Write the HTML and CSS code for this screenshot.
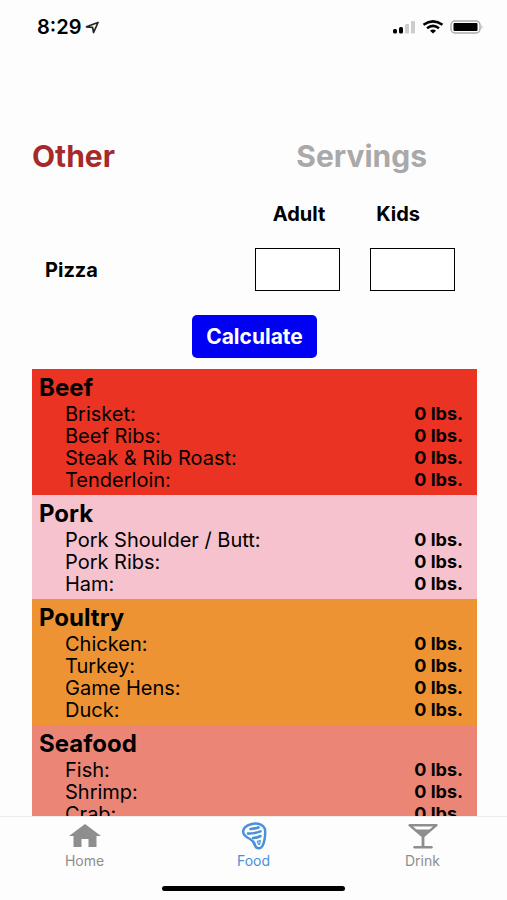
FILE: index.html
```html
<!DOCTYPE html>
<html lang="en">
<head>
  <meta charset="UTF-8">
  <title>Food Calculator</title>
  <meta name="viewport" content="width=device-width, initial-scale=1">
  <link rel="stylesheet" href="styles.css">
</head>
<body>

<header class="status-bar">
  <div class="status-time">
    <span>8:29</span>
    <svg width="15" height="13" viewBox="0 0 15 13"><path d="M1.5 5.8 L13 1.5 L8.6 11.5 L7.6 6.3 Z" fill="none" stroke="#222" stroke-width="1.7" stroke-linejoin="round"/></svg>
  </div>
  <div class="status-icons">
    <svg width="24" height="14" viewBox="0 0 24 14">
      <rect x="1" y="9" width="4" height="4.5" rx="1.5" fill="#000"/>
      <rect x="7" y="7" width="4" height="6.5" rx="1.5" fill="#000"/>
      <rect x="13" y="4" width="4" height="9.5" rx="1" fill="#ccc"/>
      <rect x="19" y="1" width="4" height="12.5" rx="1" fill="#ccc"/>
    </svg>
    <svg width="22" height="14" viewBox="0 0 22 14">
      <path d="M1.5 4.8 Q11 -2 20.5 4.8" fill="none" stroke="#000" stroke-width="2.6"/>
      <path d="M5 8.2 Q11 3.6 17 8.2" fill="none" stroke="#000" stroke-width="2.5"/>
      <path d="M8 10.8 Q11 8.4 14 10.8 L11 13.4 Z" fill="#000"/>
    </svg>
    <svg width="34" height="14" viewBox="0 0 34 14">
      <rect x="1" y="1" width="29" height="12" rx="4" fill="none" stroke="#aaa" stroke-width="1.4"/>
      <rect x="3.5" y="3" width="24" height="8" rx="1" fill="#000"/>
      <path d="M31.5 5 Q33.5 7 31.5 9 Z" fill="#aaa"/>
    </svg>
  </div>
</header>

<main class="content">
  <form class="servings-form">
    <div class="title-row">
      <h1>Other</h1>
      <h2>Servings</h2>
    </div>
    <div class="label-row">
      <label for="pizza-adult">Adult</label>
      <label for="pizza-kids">Kids</label>
    </div>
    <div class="input-row">
      <span class="food-name">Pizza</span>
      <input type="text" inputmode="numeric" id="pizza-adult" name="pizza_adult">
      <input type="text" inputmode="numeric" id="pizza-kids" name="pizza_kids">
    </div>
    <button type="button" class="calculate">Calculate</button>
  </form>

  <section class="group beef">
    <h3>Beef</h3>
    <dl>
      <div><dt>Brisket:</dt><dd>0 lbs.</dd></div>
      <div><dt>Beef Ribs:</dt><dd>0 lbs.</dd></div>
      <div><dt>Steak &amp; Rib Roast:</dt><dd>0 lbs.</dd></div>
      <div><dt>Tenderloin:</dt><dd>0 lbs.</dd></div>
    </dl>
  </section>

  <section class="group pork">
    <h3>Pork</h3>
    <dl>
      <div><dt>Pork Shoulder / Butt:</dt><dd>0 lbs.</dd></div>
      <div><dt>Pork Ribs:</dt><dd>0 lbs.</dd></div>
      <div><dt>Ham:</dt><dd>0 lbs.</dd></div>
    </dl>
  </section>

  <section class="group poultry">
    <h3>Poultry</h3>
    <dl>
      <div><dt>Chicken:</dt><dd>0 lbs.</dd></div>
      <div><dt>Turkey:</dt><dd>0 lbs.</dd></div>
      <div><dt>Game Hens:</dt><dd>0 lbs.</dd></div>
      <div><dt>Duck:</dt><dd>0 lbs.</dd></div>
    </dl>
  </section>

  <section class="group seafood">
    <h3>Seafood</h3>
    <dl>
      <div><dt>Fish:</dt><dd>0 lbs.</dd></div>
      <div><dt>Shrimp:</dt><dd>0 lbs.</dd></div>
      <div><dt>Crab:</dt><dd>0 lbs.</dd></div>
    </dl>
  </section>
</main>

<footer class="bottom">
  <nav class="tabs">
    <a href="#home">
      <svg width="32" height="28" viewBox="0 0 32 28"><path d="M16 2 L32 14 H27.5 V25 H19.5 V17 H12.5 V25 H4.5 V14 H0 Z" fill="currentColor"/></svg>
      Home
    </a>
    <a href="#food" class="active">
      <svg width="32" height="28" viewBox="0 0 32 28">
        <path d="M13 2.2 C20 0.2 27.2 3.2 27.2 9.5 C27.2 15 26.5 20 24.4 24 C22.8 27 18.4 27 17.2 23.8 C16.3 20.5 15.2 18.6 12 17 C7.5 14.8 4.8 12.2 5.2 8.8 C5.7 5.4 9 3.2 13 2.2 Z" fill="none" stroke="currentColor" stroke-width="2.5"/>
        <path d="M12.5 7 Q17 6.6 20.5 5.4 M10 11.6 Q17 11.6 22.5 9.4 M15 16 Q19 15.8 22.5 14" fill="none" stroke="currentColor" stroke-width="2.6" stroke-linecap="round"/>
        <path d="M19.4 19.4 L22.4 18.6 L21.6 22.4 H20.4 Z" fill="none" stroke="currentColor" stroke-width="1.2" stroke-linejoin="round"/>
      </svg>
      Food
    </a>
    <a href="#drink">
      <svg width="32" height="28" viewBox="0 0 32 28">
        <path d="M2.5 3.2 H29.5 L16 14.5 Z" fill="none" stroke="currentColor" stroke-width="2.4" stroke-linejoin="round"/>
        <path d="M7.5 7.5 H24.5 L16 14.5 Z M14.6 13 H17.4 V25 H14.6 Z" fill="currentColor"/>
        <path d="M7.5 25.3 H24.5" stroke="currentColor" stroke-width="2.4" stroke-linecap="round"/>
      </svg>
      Drink
    </a>
  </nav>
  <div class="home-indicator"></div>
</footer>

</body>
</html>
```
FILE: styles.css
```css
* {
  box-sizing: border-box;
}

body {
  margin: 0;
  height: 100vh;
  display: flex;
  flex-direction: column;
  font-family: Inter, "Liberation Sans", sans-serif;
  background: #fdfdfd;
  color: #000;
}

h1, h2, h3, dl, dd {
  margin: 0;
}

/* status bar */
.status-bar {
  display: flex;
  justify-content: space-between;
  align-items: center;
  height: 54px;
  padding: 0 23px 0 37px;
  flex-shrink: 0;
}

.status-time {
  display: flex;
  align-items: center;
  gap: 4px;
  font-size: 20px;
  font-weight: 600;
}

.status-icons {
  display: flex;
  gap: 6px;
}

/* scrolling content */
.content {
  flex: 1;
  min-height: 0;
  overflow-y: auto;
  scrollbar-width: none;
  padding: 84px 30px 0 32px;
}

.servings-form {
  display: flex;
  flex-direction: column;
}

.title-row {
  display: flex;
  justify-content: space-between;
  padding-right: 50px;
  line-height: 36px;
}

.title-row h1,
.title-row h2 {
  font-size: 30px;
  font-weight: 700;
}

.title-row h1 {
  color: #a52a2a;
}

.title-row h2 {
  color: #a9a9a9;
}

.label-row {
  display: flex;
  justify-content: flex-end;
  gap: 51px;
  margin-top: 28px;
  padding-right: 57px;
  font-size: 20px;
  font-weight: 700;
  line-height: 24px;
}

.input-row {
  display: flex;
  align-items: center;
  gap: 30px;
  margin-top: 22px;
  padding: 0 22px 0 13px;
}

.food-name {
  flex: 1;
  font-size: 20px;
  font-weight: 700;
}

.input-row input {
  width: 85px;
  height: 43px;
  padding: 0 8px;
  border: 1px solid #000;
  border-radius: 0;
  background: #fff;
  font: inherit;
  font-size: 20px;
}

.calculate {
  align-self: center;
  margin: 24px 0 11px;
  padding: 0 14px;
  border: none;
  border-radius: 5px;
  background: #0000f5;
  color: #fff;
  font-family: inherit;
  font-size: 21px;
  font-weight: 700;
  line-height: 43px;
  cursor: pointer;
}

/* results */
.group {
  padding: 4px 14px 4px 7px;
}

.group h3 {
  font-size: 24px;
  font-weight: 700;
  line-height: 30px;
}

.group dl div {
  display: flex;
  justify-content: space-between;
  padding-left: 26px;
  line-height: 22px;
}

.group dt {
  font-size: 20px;
}

.group dd {
  font-size: 18px;
  font-weight: 700;
}

.beef {
  background: #ea3323;
}

.pork {
  background: #f6c2cd;
}

.poultry {
  background: #ed9333;
}

.seafood {
  background: #eb8677;
}

/* tab bar */
.bottom {
  flex-shrink: 0;
  border-top: 1px solid #ededed;
  background: #fdfdfd;
}

.tabs {
  display: flex;
  padding-top: 5px;
}

.tabs a {
  flex: 1;
  display: flex;
  flex-direction: column;
  align-items: center;
  color: #8e8e8e;
  font-size: 14px;
  line-height: 22px;
  text-decoration: none;
}

.tabs .active {
  color: #4a90d9;
}

.home-indicator {
  width: 36%;
  height: 5px;
  margin: 14px auto 9px;
  border-radius: 3px;
  background: #000;
}
```
